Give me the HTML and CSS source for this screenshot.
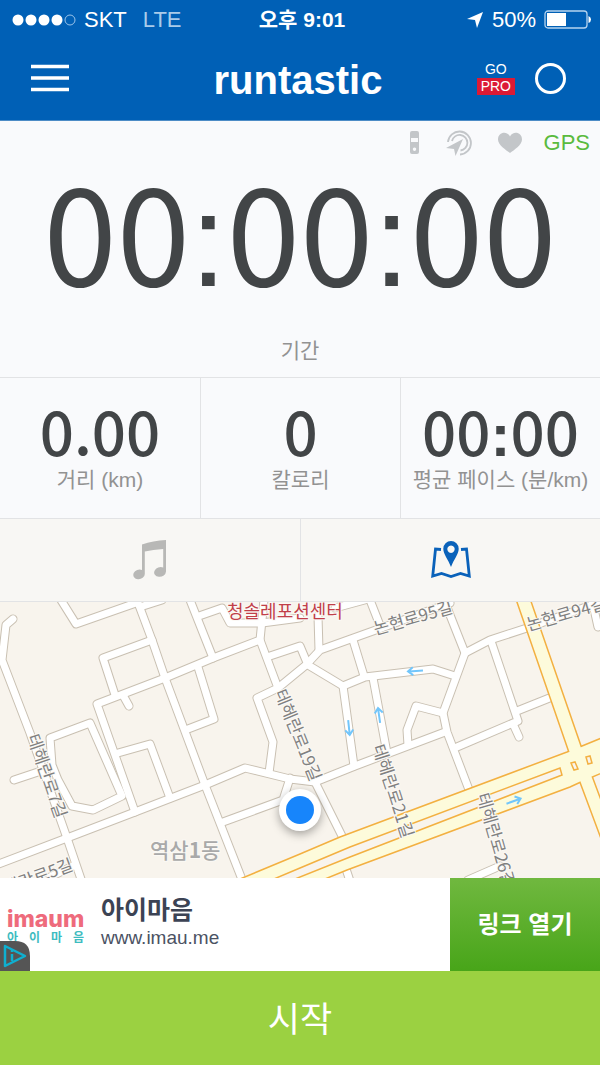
FILE: index.html
```html
<!DOCTYPE html>
<html lang="ko">
<head>
    <meta charset="UTF-8">
    <meta name="viewport" content="width=device-width, initial-scale=1.0">
    <title>runtastic</title>
    <link rel="stylesheet" href="styles.css">
</head>
<body>
    <header class="top">
        <div class="status-bar">
            <div class="status-left">
                <svg class="signal" width="64" height="14" viewBox="0 0 64 14">
                    <g fill="#fff">
                        <circle cx="6" cy="7" r="5.5"/>
                        <circle cx="19" cy="7" r="5.5"/>
                        <circle cx="32" cy="7" r="5.5"/>
                        <circle cx="45" cy="7" r="5.5"/>
                    </g>
                    <circle cx="58" cy="7" r="5" fill="none" stroke="#9cc4ea"/>
                </svg>
                <span>SKT</span>
                <span class="network">LTE</span>
            </div>
            <div class="clock">오후 9:01</div>
            <div class="status-right">
                <svg width="18" height="18" viewBox="0 0 18 18"><path d="M17 1 11 17 9 9 1 8z" fill="#fff"/></svg>
                <span>50%</span>
                <svg class="battery" width="48" height="20" viewBox="0 0 48 20">
                    <rect x="1" y="1" width="42" height="17" rx="3" fill="none" stroke="#b5d3ef" stroke-width="1.3"/>
                    <rect x="3" y="3" width="19" height="13" fill="#fff"/>
                    <path d="M44.500 6q2.500 1 2.500 3.500t-2.500 3.500z" fill="#fff"/>
                </svg>
            </div>
        </div>
        <nav class="navbar">
            <button class="menu-btn" aria-label="메뉴">
                <svg width="40" height="30" viewBox="0 0 40 30"><path d="M1 3.500h38M1 15h38M1 26.500h38" stroke="#fff" stroke-width="3.500"/></svg>
            </button>
            <h1 class="logo">runtastic</h1>
            <div class="nav-right">
                <a class="go-pro" href="#"><span>GO</span><span class="pro">PRO</span></a>
                <button class="ring-btn" aria-label="상태"><span class="ring"></span></button>
            </div>
        </nav>
    </header>

    <main>
        <section class="timer">
            <div class="sensors">
                <svg width="12" height="24" viewBox="0 0 12 24">
                    <path fill="#c3c6c9" fill-rule="evenodd" d="M3 0h5q2 0 2 2v19q0 2-2 2H3q-2 0-2-2V2q0-2 2-2zM2 7v4h7V7zM5.500 16.500a1.700 1.700 0 1 0 .01 0z"/>
                </svg>
                <svg width="26" height="26" viewBox="0 0 26 26">
                    <g fill="none" stroke="#c3c6c9" stroke-width="1.800">
                        <path d="M2 12A11.500 11.500 0 1 1 14 24.500"/>
                        <path d="M6 11A7.800 7.800 0 1 1 14.500 20.500"/>
                    </g>
                    <path fill="#c3c6c9" d="M17 9 9.500 26 8 19 0 18z"/>
                </svg>
                <svg width="26" height="22" viewBox="0 0 26 22">
                    <path fill="#c3c6c9" d="M13 21C9 18 1 13 1 7.500 1 0 10-1.500 13 4.500 16-1.500 25 0 25 7.500 25 13 17 18 13 21z"/>
                </svg>
                <span class="gps">GPS</span>
            </div>
            <div class="time">00<span class="colon">:</span>00<span class="colon">:</span>00</div>
            <div class="label">기간</div>
        </section>

        <section class="stats">
            <div class="stat">
                <div class="value">0.00</div>
                <div class="label">거리 (km)</div>
            </div>
            <div class="stat">
                <div class="value">0</div>
                <div class="label">칼로리</div>
            </div>
            <div class="stat">
                <div class="value">00<span class="colon">:</span>00</div>
                <div class="label">평균 페이스 (분/km)</div>
            </div>
        </section>

        <div class="tabs">
            <button class="tab" aria-label="음악">
                <svg width="34" height="40" viewBox="0 0 34 40">
                    <path fill="#b8b8b6" d="M9 4.500Q20 .800 33 0V31.500a6 4.800 -15 1 1-2.800-4V9Q20 9.500 11.800 11.500V34a5.800 4.800 -15 1 1-2.800-4z"/>
                </svg>
            </button>
            <button class="tab active" aria-label="지도">
                <svg width="40" height="38" viewBox="0 0 40 38">
                    <path fill="none" stroke="#0a62ba" stroke-width="2.800" d="M10 8.500 4.500 8 1.700 35 10.500 32.500 20 35.500 29.500 32.500 38.300 35 35.500 8 30 8.500"/>
                    <path fill="#0a62ba" fill-rule="evenodd" d="M20 0a7.700 7.700 0 0 1 7.700 7.700C27.700 13 23 18 20 26c-3-8-7.700-13-7.700-18.300A7.700 7.700 0 0 1 20 0zM20 4.500a3.700 3.700 0 1 0 .01 0z"/>
                </svg>
            </button>
        </div>

        <svg class="map" viewBox="0 2 600 276">
            <defs>
                <g id="streets">
                    <path d="M13 19 6 25 2 60 30 133 67 238 82 282"/>
                    <path d="M61 0 76 24 136 3"/>
                    <path d="M137 0 152 40 165 78 205 185 243 282"/>
                    <path d="M140 7 162 0"/>
                    <path d="M152 40 103 58 115 95"/>
                    <path d="M260 40 213 58 165 78 97 104 135 212"/>
                    <path d="M124 97 129 106"/>
                    <path d="M50 138 90 123 122 196 93 210 72 206 58 180 52 165z"/>
                    <path d="M14 180 38 172"/>
                    <path d="M118 153 150 144 170 198"/>
                    <path d="M-4 265 67 238 135 212 205 185 245 168 290 179 315 182 355 166 445 132"/>
                    <path d="M190 0 213 58"/>
                    <path d="M199 16 222 8 230 23 262 23 300 18"/>
                    <path d="M264 0 260 40 278 88 257 98 273 142 269 173"/>
                    <path d="M198 67 214 119 188 129"/>
                    <path d="M267 57 300 46 308 65 343 86 365 77 433 69 455 76"/>
                    <path d="M278 88 306 65 320 50 373 31 450 3"/>
                    <path d="M318 16 319 50"/>
                    <path d="M335 8 372-2"/>
                    <path d="M370 0 381 28"/>
                    <path d="M353 40 364 76"/>
                    <path d="M343 86 354 166"/>
                    <path d="M373 78 387 153"/>
                    <path d="M446 5 465 53 443 113 447 132 471 195"/>
                    <path d="M465 53 490 40 530 27 600 2"/>
                    <path d="M491 41 518 121 457 147"/>
                    <path d="M517 111 552 97"/>
                    <path d="M514 126 519 137"/>
                    <path d="M443 113 416 106 407 130 408 145"/>
                    <path d="M223 222 283 200 290 178"/>
                    <path d="M315 182 345 242"/>
                    <path d="M345 266 351 284"/>
                    <path d="M592 0 598 27"/>
                    <path d="M468 280 500 266"/>
                    <path d="M50 277 75 265"/>
                </g>
                <path id="arrow" d="M-8 0H6M2-4 7 0 2 4"/>
            </defs>
            <rect width="600" height="290" fill="#f8f4ed"/>
            <use href="#streets" class="casing"/>
            <use href="#streets" class="street"/>

            <!-- main roads -->
            <path d="M522-4 577 155 608 238" fill="none" stroke="#f3b041" stroke-width="15"/>
            <path d="M240 279 300 254 340 237 567 152 582 146 604 137V172L583 181 570 187 347 270 320 281z" fill="#fdfbdb" stroke="#f3b041" stroke-width="1.500"/>
            <path d="M522-4 577 155 608 238" fill="none" stroke="#fdfbdb" stroke-width="12"/>
            <path d="M262 284 300 268 350 247 560 168 562 175 350 257 285 283z" fill="#f8f4ed" stroke="#f3b041" stroke-width="1.500"/>
            <path d="M571 163 575 162 578 169 574 170zM586 157 590 156 592 163 588 164z" fill="#f8f4ed" stroke="#f3b041" stroke-width="1.500"/>

            <g class="arrows">
                <use href="#arrow" transform="translate(415 71) rotate(176)"/>
                <use href="#arrow" transform="translate(349 128) rotate(84)"/>
                <use href="#arrow" transform="translate(379 115) rotate(-98)"/>
                <use href="#arrow" transform="translate(514 201) rotate(-20)"/>
            </g>

            <g class="street-names">
                <text transform="translate(47 176) rotate(71)" dy="6">테헤란로7길</text>
                <text transform="translate(298 135) rotate(68)" dy="6">테헤란로19길</text>
                <text transform="translate(393 191) rotate(72)" dy="6">테헤란로21길</text>
                <text transform="translate(496 240) rotate(74)" dy="6">테헤란로26길</text>
                <text transform="translate(413 18) rotate(-16)" dy="6">논현로95길</text>
                <text transform="translate(566 14) rotate(-16)" dy="6">논현로94길</text>
                <text transform="translate(31 279) rotate(-20)" dy="6">테헤란로5길</text>
            </g>
            <text class="place" x="227" y="18">청솔레포션센터</text>
            <text class="district" x="150" y="258">역삼<tspan class="num">1</tspan>동</text>

            <circle class="pin" cx="300" cy="210" r="21"/>
            <circle cx="300" cy="210" r="14" fill="#1785fb"/>
        </svg>
    </main>

    <footer>
        <div class="ad">
            <div class="ad-logo">
                <span class="ad-brand">imaum</span>
                <span class="ad-sub"><span>아</span><span>이</span><span>마</span><span>음</span></span>
                <svg class="ad-choices" width="30" height="30" viewBox="0 0 30 30">
                    <path fill="#555" d="M0 0h15q15 0 15 15v15H0z"/>
                    <path fill="none" stroke="#0fb0d0" stroke-width="2.500" stroke-linejoin="round" d="M5 5 25 15 5 25z"/>
                    <path stroke="#0fb0d0" stroke-width="2.500" d="M12 13v7M12 9v2"/>
                </svg>
            </div>
            <div class="ad-text">
                <strong>아이마음</strong>
                <span>www.imau.me</span>
            </div>
            <a class="ad-link" href="#">링크 열기</a>
        </div>
        <button class="start-btn">시작</button>
    </footer>
</body>
</html>
```
FILE: styles.css
```css
:root {
    --blue: #0060b6;
    --panel: #f9fafc;
    --line: #e2e3e5;
    --dark: #424547;
    --muted: #929292;
    --start: #9bd141;
}

* {
    box-sizing: border-box;
}

body {
    margin: 0;
    font-family: "Liberation Sans", "Noto Sans CJK KR", sans-serif;
    background: var(--panel);
    color: var(--dark);
}

button {
    padding: 0;
    border: none;
    background: none;
    font-family: inherit;
    cursor: pointer;
}

a {
    color: inherit;
    text-decoration: none;
}

svg {
    display: block;
}

/* Header */
.top {
    background: var(--blue);
    color: #fff;
    border-bottom: 1px solid #4d8cc6;
}

.status-bar {
    display: grid;
    grid-template-columns: 1fr auto 1fr;
    align-items: center;
    height: 40px;
    padding: 0 8px 0 12px;
    font-size: 22px;
}

.status-left,
.status-right {
    display: flex;
    align-items: center;
    gap: 8px;
}

.status-right {
    justify-content: flex-end;
}

.network {
    margin-left: 8px;
    color: #a9cbea;
}

.clock {
    font-size: 21px;
    font-weight: bold;
    line-height: 24px;
}

.navbar {
    display: grid;
    grid-template-columns: 1fr auto 1fr;
    align-items: center;
    height: 80px;
    padding: 0 34px 4px 30px;
}

.menu-btn {
    justify-self: start;
}

.logo {
    margin: 0;
    padding-top: 3px;
    font-size: 40px;
    line-height: 40px;
}

.nav-right {
    display: flex;
    justify-content: flex-end;
    align-items: center;
    gap: 20px;
}

.go-pro {
    display: flex;
    flex-direction: column;
    align-items: center;
    font-size: 14px;
    line-height: 17px;
}

.pro {
    padding: 0 4px;
    background: #dc1a35;
}

.ring {
    display: block;
    width: 31px;
    height: 31px;
    border: 3px solid #fff;
    border-radius: 50%;
}

/* Timer */
.timer {
    padding: 8px 0 12px;
    text-align: center;
}

.sensors {
    display: flex;
    justify-content: flex-end;
    align-items: center;
    gap: 25px;
    height: 28px;
    padding-right: 10px;
}

.gps {
    margin-left: -4px;
    font-size: 22px;
    line-height: 28px;
    color: #5abb3e;
}

.time,
.value {
    font-family: "Noto Sans CJK KR", sans-serif;
}

.time {
    padding-bottom: 36px;
    font-size: 132px;
    line-height: 144px;
}

.colon {
    font-family: "Liberation Sans", sans-serif;
    line-height: 0;
}

.label {
    font-size: 21px;
    line-height: 28px;
    color: var(--muted);
}

/* Stats */
.stats {
    display: grid;
    grid-template-columns: repeat(3, 1fr);
    border-top: 1px solid var(--line);
    border-bottom: 1px solid var(--line);
    text-align: center;
}

.stat {
    padding: 24px 0;
    white-space: nowrap;
}

.stat + .stat {
    border-left: 1px solid var(--line);
}

.value {
    padding-bottom: 8px;
    font-size: 60px;
    font-weight: 500;
    line-height: 56px;
}

.value .colon {
    font-weight: bold;
}

/* Tabs */
.tabs {
    display: grid;
    grid-template-columns: 1fr 1fr;
    background: #f8f7f4;
    border-bottom: 1px solid var(--line);
}

.tab {
    display: flex;
    justify-content: center;
    align-items: center;
    height: 82px;
}

.tab + .tab {
    border-left: 1px solid var(--line);
}

/* Map */
.map {
    width: 100%;
    height: auto;
    font-family: "Noto Sans CJK KR", sans-serif;
}

.casing,
.street {
    fill: none;
    stroke-linecap: round;
    stroke-linejoin: round;
}

.casing {
    stroke: #c9c0b2;
    stroke-width: 9px;
}

.street {
    stroke: #fff;
    stroke-width: 7px;
}

.arrows {
    fill: none;
    stroke: #72c6fb;
    stroke-width: 2px;
}

.street-names {
    font-size: 17px;
    text-anchor: middle;
    fill: #808080;
}

.map text {
    paint-order: stroke;
    stroke: #fbf9f5;
    stroke-width: 2px;
}

.place {
    font-size: 18px;
    fill: #c13f49;
}

.district {
    font-size: 21px;
    font-weight: 500;
    fill: #a9a9a9;
}

.num {
    font-weight: bold;
}

.pin {
    fill: #fff;
    filter: drop-shadow(0 3px 5px rgba(0, 0, 0, 0.35));
}

/* Ad */
.ad {
    display: grid;
    grid-template-columns: 101px 1fr 25%;
    height: 93px;
    background: #fff;
}

.ad-logo {
    position: relative;
    display: flex;
    flex-direction: column;
    padding: 30px 17px 0 7px;
}

.ad-brand {
    font-family: Inter, sans-serif;
    font-size: 23px;
    font-weight: 800;
    line-height: 23px;
    color: #ee6b7c;
}

.ad-sub {
    display: flex;
    justify-content: space-between;
    font-size: 12px;
    font-weight: bold;
    line-height: 14px;
    color: #3dbcc0;
}

.ad-choices {
    position: absolute;
    left: 0;
    bottom: 0;
}

.ad-text {
    display: flex;
    flex-direction: column;
    padding-top: 16px;
    font-size: 19px;
    line-height: 24px;
    color: #4b5263;
}

.ad-text strong {
    font-size: 25px;
    line-height: 32px;
    color: #3c4354;
}

.ad-link {
    display: flex;
    justify-content: center;
    align-items: center;
    padding-bottom: 4px;
    background: linear-gradient(#70b83f, #48a519);
    color: #fff;
    font-size: 24px;
    font-weight: bold;
}

.start-btn {
    display: block;
    width: 100%;
    height: 94px;
    padding-bottom: 4px;
    background: var(--start);
    color: #fff;
    font-size: 35px;
}
```
